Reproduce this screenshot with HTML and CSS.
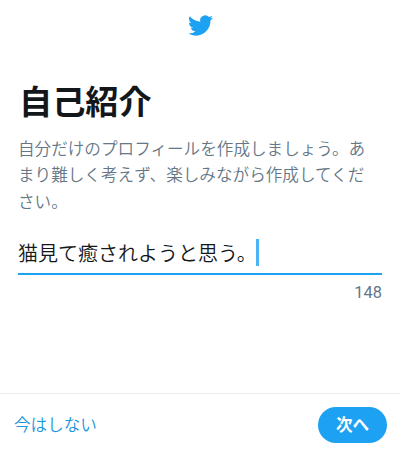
FILE: index.html
```html
<!DOCTYPE html>
<html lang="ja">
  <head>
    <meta charset="UTF-8" />
    <meta name="viewport" content="width=device-width, initial-scale=1.0" />
    <title>自己紹介</title>
    <link rel="stylesheet" href="styles.css">
  </head>
  <body>
    <header class="header">
      <svg class="logo" viewBox="0 0 24 24" aria-hidden="true">
        <path d="M23.953 4.57a10 10 0 01-2.825.775 4.958 4.958 0 002.163-2.723c-.951.555-2.005.959-3.127 1.184a4.92 4.92 0 00-8.384 4.482C7.69 8.095 4.067 6.13 1.64 3.162a4.822 4.822 0 00-.666 2.475c0 1.71.87 3.213 2.188 4.096a4.904 4.904 0 01-2.228-.616v.06a4.923 4.923 0 003.946 4.827 4.996 4.996 0 01-2.212.085 4.936 4.936 0 004.604 3.417 9.867 9.867 0 01-6.102 2.105c-.39 0-.779-.023-1.17-.067a13.995 13.995 0 007.557 2.209c9.053 0 13.998-7.496 13.998-13.985 0-.21 0-.42-.015-.63A9.935 9.935 0 0024 4.59z" />
      </svg>
    </header>

    <main class="content">
      <h1>自己紹介</h1>
      <p class="description">自分だけのプロフィールを作成しましょう。あまり難しく考えず、楽しみながら作成してください。</p>

      <div class="bio-field">
        <span class="bio-text">猫見て癒されようと思う。</span>
        <span class="caret"></span>
      </div>
      <div class="counter">148</div>
    </main>

    <footer class="footer">
      <a class="skip" href="#">今はしない</a>
      <button class="next" type="button">次へ</button>
    </footer>
  </body>
</html>
```
FILE: styles.css
```css
* {
  margin: 0;
  padding: 0;
  box-sizing: border-box;
}

body {
  display: flex;
  flex-direction: column;
  height: 100vh;
  background-color: #fff;
  color: #14171a;
  font-family: "Noto Sans CJK JP", sans-serif;
  font-weight: 350;
  overflow: hidden;
}

.header {
  display: flex;
  justify-content: center;
  height: 50px;
  padding: 13px 0 0 1px;
}

.logo {
  width: 25px;
  height: 25px;
  fill: #1da1f2;
}

.content {
  flex: 1;
  padding: 25px 18px 0;
}

h1 {
  padding-left: 1px;
  font-size: 33.2px;
  font-weight: 700;
  line-height: 50px;
}

.description {
  margin-top: 9.5px;
  padding-right: 12px;
  color: #657786;
  font-size: 16.6px;
  line-height: 26.6px;
}

.bio-field {
  display: flex;
  align-items: center;
  height: 45px;
  margin-top: 15.7px;
  border-bottom: 2px solid #1da1f2;
}

.bio-text {
  padding-top: 3px;
  font-size: 20px;
  line-height: 30px;
}

.caret {
  width: 3px;
  height: 27px;
  margin-top: 3px;
  margin-left: -1px;
  background-color: #4db5f5;
}

.counter {
  margin-top: 6px;
  color: #657786;
  font-family: Roboto, sans-serif;
  font-size: 16.4px;
  font-weight: 400;
  line-height: 24px;
  text-align: right;
}

.footer {
  display: flex;
  align-items: center;
  justify-content: space-between;
  height: 57px;
  padding: 5px 13px 0;
  border-top: 1px solid #e6ecf0;
}

.skip {
  padding: 0 0 2px 1px;
  color: #1b95e0;
  font-size: 16.6px;
  text-decoration: none;
}

.next {
  width: 69px;
  height: 36px;
  padding-bottom: 2px;
  border: none;
  border-radius: 18px;
  background-color: #1da1f2;
  color: #fff;
  font-family: inherit;
  font-size: 16.6px;
  font-weight: 700;
  cursor: pointer;
}
```
